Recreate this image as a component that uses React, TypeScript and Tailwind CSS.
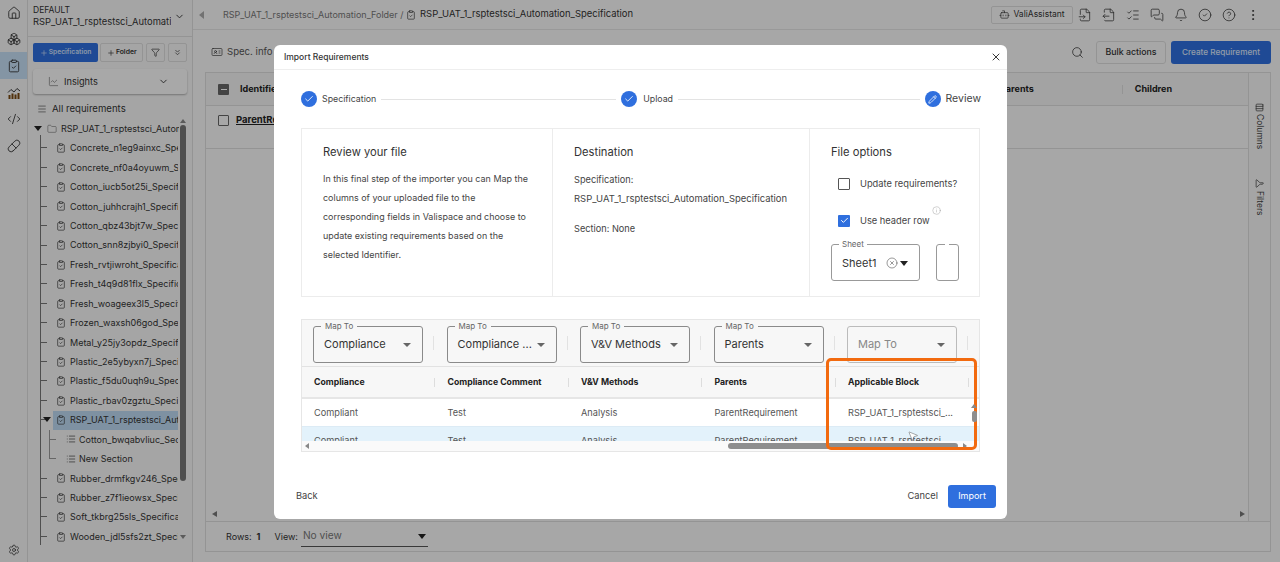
import React from "react";
import {
  Home, Boxes, ClipboardCheck, ChartLine, CodeXml, Pill, Settings, Bot, FileInput, FileOutput, ListChecks,
  MessagesSquare, Bell, CircleCheck, CircleHelp, EllipsisVertical, Search, X, Check, Pencil, Info, CircleX,
  Funnel, ChevronsDown, ChevronDown, Plus, Menu, Folder, List, Columns3, IdCard, MousePointer2,
} from "lucide-react";

const font = { fontFamily: "Inter, 'Liberation Sans', sans-serif" };

const specs = [
  "Concrete_n1eg9ainxc_Specification", "Concrete_nf0a4oyuwm_Specification", "Cotton_iucb5ot25i_Specification",
  "Cotton_juhhcrajh1_Specification", "Cotton_qbz43bjt7w_Specification", "Cotton_snn8zjbyi0_Specification",
  "Fresh_rvtjiwroht_Specification", "Fresh_t4q9d81flx_Specification", "Fresh_woageex3l5_Specification",
  "Frozen_waxsh06god_Specification", "Metal_y25jy3opdz_Specification", "Plastic_2e5ybyxn7j_Specification",
  "Plastic_f5du0uqh9u_Specification", "Plastic_rbav0zgztu_Specification",
];
const specsAfter = [
  "Rubber_drmfkgv246_Specification", "Rubber_z7f1ieowsx_Specification", "Soft_tkbrg25sls_Specification", "Wooden_jdl5sfs2zt_Specification",
];

function Tri({ className = "" }: { className?: string }) {
  return <span className={`block w-0 h-0 border-l-[4px] border-r-[4px] border-t-[5px] border-l-transparent border-r-transparent border-t-[#222] ${className}`} />;
}

function TreeRow({ name, selected }: { name: string; selected?: boolean }) {
  return (
    <div className="relative h-[19.43px] flex items-center pl-[19px]">
      <span className="absolute left-[6px] top-[9px] w-[7px] h-px bg-[#777]" />
      {selected && <span className="absolute left-[9px] top-[7px]"><Tri /></span>}
      <div className={`flex items-center gap-[4px] w-[125px] h-[19px] overflow-hidden pl-[3px] ${selected ? "bg-[#bcd9f2]" : ""}`}>
        <ClipboardCheck size={10} strokeWidth={1.6} className="shrink-0 text-[#333]" />
        <span className="text-[9px] text-[#333] whitespace-nowrap">{name}</span>
      </div>
    </div>
  );
}

function SectionRow({ name, last }: { name: string; last?: boolean }) {
  return (
    <div className="relative h-[19.43px] flex items-center pl-[32px]">
      <span className={`absolute left-[15px] top-0 w-px bg-[#999] ${last ? "h-[10px]" : "h-full"}`} />
      <span className="absolute left-[15px] top-[9px] w-[7px] h-px bg-[#999]" />
      <List size={10} strokeWidth={1.6} className="shrink-0 text-[#333]" />
      <span className="ml-[3px] text-[9px] text-[#333] whitespace-nowrap overflow-hidden w-[99px]">{name}</span>
    </div>
  );
}

function StepCircle({ pencil }: { pencil?: boolean }) {
  return (
    <span className="w-4 h-4 rounded-full bg-[#2f6fde] flex items-center justify-center shrink-0">
      {pencil ? <Pencil size={9} className="text-white" /> : <Check size={10} strokeWidth={2} className="text-white" />}
    </span>
  );
}

function MapSelect({ value, placeholder }: { value: string; placeholder?: boolean }) {
  return (
    <div className={`relative w-[110px] h-[37px] rounded-[3px] border flex items-center pl-[10px] pr-[11px] justify-between ${placeholder ? "border-[#bbb]" : "border-[#8a8a8a]"}`}>
      {!placeholder && <span className="absolute left-[7px] -top-[6px] bg-[#f7f7f7] px-[4px] text-[8px] leading-[10px] text-[#666]">Map To</span>}
      <span className={`text-[11px] whitespace-nowrap ${placeholder ? "text-[#888]" : "text-[#333]"}`}>{value}</span>
      <span className="w-0 h-0 border-l-[4px] border-r-[4px] border-t-[4px] border-l-transparent border-r-transparent border-t-[#666]" />
    </div>
  );
}

const cols = [
  { map: "Compliance", head: "Compliance", val: "Compliant" },
  { map: "Compliance ...", head: "Compliance Comment", val: "Test" },
  { map: "V&V Methods", head: "V&V Methods", val: "Analysis" },
  { map: "Parents", head: "Parents", val: "ParentRequirement" },
  { map: "Map To", head: "Applicable Block", val: "RSP_UAT_1_rsptestsci_...", placeholder: true },
];

export default function App() {
  return (
    <div className="relative w-[1280px] h-[562px] overflow-hidden flex bg-[#fafafa]" style={font}>
      {/* Icon rail */}
      <div className="w-[28px] shrink-0 flex flex-col items-center border-r border-[#ddd] bg-[#f7f7f7] text-[#333]">
        <div className="h-[26px] flex items-center justify-center w-full"><Home size={14} strokeWidth={1.5} /></div>
        <div className="h-[26px] flex items-center justify-center w-full"><Boxes size={14} strokeWidth={1.5} /></div>
        <div className="h-[27px] flex items-center justify-center w-full bg-[#c5dff5]"><ClipboardCheck size={14} strokeWidth={1.5} /></div>
        <div className="h-[27px] flex items-center justify-center w-full">
          <svg width="14" height="14" viewBox="0 0 14 14" fill="none">
            <path d="M1 6.5 L4 3.5 L7 6 L10 2.5 L13 5" stroke="#3a3a3a" strokeWidth="1" />
            <path d="M1.5 9h2v4h-2zM4.5 7.5h2V13h-2zM7.5 8.5h2V13h-2zM10.5 7h2v6h-2z" fill="#7a4a12" />
          </svg>
        </div>
        <div className="h-[26px] flex items-center justify-center w-full"><CodeXml size={14} strokeWidth={1.5} /></div>
        <div className="h-[27px] flex items-center justify-center w-full"><Pill size={14} strokeWidth={1.5} /></div>
        <div className="mt-auto h-[18px] flex items-start justify-center w-full"><Settings size={12} strokeWidth={1.5} /></div>
      </div>

      {/* Sidebar */}
      <div className="w-[165px] shrink-0 flex flex-col border-r border-[#ddd] bg-[#f7f7f7]">
        <div className="h-[37px] shrink-0 flex items-center pl-[5px] pb-[4px] border-b border-[#ddd]">
          <div className="w-[138px] overflow-hidden leading-[12px]">
            <div className="text-[8.5px] text-[#333]">DEFAULT</div>
            <div className="text-[9.4px] text-[#333] whitespace-nowrap">RSP_UAT_1_rsptestsci_Automation</div>
          </div>
          <ChevronDown size={11} className="ml-[3px] text-[#333]" />
        </div>
        <div className="flex gap-[2px] px-[5px] mt-[6px]">
          <button className="w-[66px] h-[19px] rounded-[2px] bg-[#2f6fde] text-[#cfe0fb] text-[6.7px] font-semibold flex items-center justify-center gap-[1px]"><Plus size={8} />Specification</button>
          <button className="w-[44px] h-[19px] rounded-[2px] border border-[#ddd] text-[#333] text-[6.8px] font-semibold flex items-center justify-center gap-[1px]"><Plus size={8} />Folder</button>
          <button className="w-[19px] h-[19px] ml-[1px] rounded-[2px] border border-[#ddd] flex items-center justify-center text-[#444]"><Funnel size={9} /></button>
          <button className="w-[19px] h-[19px] ml-[1px] rounded-[2px] border border-[#ddd] flex items-center justify-center text-[#444]"><ChevronsDown size={9} /></button>
        </div>
        <div className="mx-[5px] mt-[7px] h-[25px] rounded-[3px] shadow-[0_1px_2px_rgba(0,0,0,0.3)] bg-[#fbfbfb] flex items-center pl-[15px] pr-[18px]">
          <ChartLine size={11} strokeWidth={1.2} className="text-[#555]" />
          <span className="ml-[5px] text-[9.2px] text-[#333]">Insights</span>
          <ChevronDown size={11} className="ml-auto text-[#333]" />
        </div>
        <div className="flex items-center ml-[9px] mt-[8px] h-[14px]">
          <Menu size={10} strokeWidth={1.4} className="text-[#333]" />
          <span className="ml-[5px] text-[9.6px] text-[#333]">All requirements</span>
        </div>

        <div className="relative flex-1 min-h-0 mt-[3px] ml-[6px] overflow-hidden">
          <div className="absolute left-[6px] top-[16px] bottom-[17px] w-px bg-[#777]" />
          <div className="flex items-center h-[19.43px]">
            <Tri />
            <Folder size={10} strokeWidth={1.2} className="ml-[5px] shrink-0 text-[#555]" />
            <span className="ml-[4px] text-[9px] text-[#333] whitespace-nowrap overflow-hidden w-[118px]">RSP_UAT_1_rsptestsci_Automation_Folder</span>
          </div>
          {specs.map((s) => <TreeRow key={s} name={s} />)}
          <TreeRow name="RSP_UAT_1_rsptestsci_Automation_Specification" selected />
          <SectionRow name="Cotton_bwqabvliuc_Section" />
          <SectionRow name="New Section" last />
          {specsAfter.map((s) => <TreeRow key={s} name={s} />)}
          {/* tree scrollbar */}
          <span className="absolute left-[146px] top-[0px] w-0 h-0 border-l-[3px] border-r-[3px] border-b-[4px] border-l-transparent border-r-transparent border-b-[#888]" />
          <span className="absolute left-[146px] top-[6px] w-[6px] h-[356px] rounded-[3px] bg-[#777]" />
          <span className="absolute left-[146px] top-[416px] w-0 h-0 border-l-[3px] border-r-[3px] border-t-[4px] border-l-transparent border-r-transparent border-t-[#888]" />
        </div>
      </div>

      {/* Main */}
      <div className="flex-1 min-w-0 flex flex-col bg-[#fafafa]">
        <div className="h-[30px] shrink-0 border-b border-[#e5e5e5] flex items-center pl-[6px] pr-[20px]">
          <span className="w-0 h-0 border-t-[4px] border-b-[4px] border-r-[5px] border-t-transparent border-b-transparent border-r-[#aaa]" />
          <span className="ml-[19px] w-[182px] text-[9px] text-[#777] whitespace-nowrap">RSP_UAT_1_rsptestsci_Automation_Folder /</span>
          <ClipboardCheck size={10} strokeWidth={1.6} className="ml-[1px] text-[#333]" />
          <span className="ml-[4px] text-[9.45px] text-[#333] whitespace-nowrap">RSP_UAT_1_rsptestsci_Automation_Specification</span>
          <button className="ml-auto w-[82px] h-[18px] rounded-[2px] border border-[#ddd] flex items-center justify-center gap-[3px] text-[8.5px] text-[#333]"><Bot size={11} strokeWidth={1.5} />ValiAssistant</button>
          <div className="flex items-center gap-[10px] ml-[5px] text-[#333]">
            <FileInput size={14} strokeWidth={1.3} />
            <FileOutput size={14} strokeWidth={1.3} />
            <ListChecks size={14} strokeWidth={1.3} />
            <MessagesSquare size={14} strokeWidth={1.3} />
            <Bell size={14} strokeWidth={1.3} />
            <CircleCheck size={14} strokeWidth={1.3} />
            <CircleHelp size={14} strokeWidth={1.3} />
            <EllipsisVertical size={14} strokeWidth={1.5} />
          </div>
        </div>

        <div className="h-[42px] shrink-0 flex items-center pl-[18px] pr-[9px] pt-[2px]">
          <IdCard size={12} strokeWidth={1.3} className="text-[#333]" />
          <span className="ml-[4px] text-[9.6px] text-[#555]">Spec. info</span>
          <Search size={13} strokeWidth={1.4} className="ml-auto text-[#333]" />
          <button className="ml-[12px] w-[70px] h-[23px] rounded-[3px] border border-[#ddd] text-[8.8px] font-medium text-[#333]">Bulk actions</button>
          <button className="ml-[5px] w-[100px] h-[23px] rounded-[3px] bg-[#2f6fde] text-[8.2px] font-medium text-[#dbe7fb]">Create Requirement</button>
        </div>

        <div className="ml-[12px] mr-[9px] flex-1 min-h-0 flex border border-[#ddd] border-b-0">
          <div className="flex-1 min-w-0 flex flex-col">
            <div className="h-[33px] shrink-0 flex items-center bg-[#f4f4f4] border-b border-[#ddd] relative">
              <span className="ml-[12px] w-[11px] h-[11px] rounded-[1px] bg-[#666] flex items-center justify-center"><span className="w-[6px] h-px bg-white" /></span>
              <span className="ml-[11px] text-[9px] font-bold text-[#222]">Identifier</span>
              <span className="ml-auto mr-[88px] text-[9px] font-bold text-[#222]">Parents</span>
              <span className="w-px h-[9px] bg-[#ddd]" />
              <span className="ml-[12px] mr-[76px] text-[9px] font-bold text-[#222]">Children</span>
            </div>
            <div className="h-[43px] shrink-0 border-b border-[#ddd] flex items-center pb-[13px]">
              <span className="ml-[12px] w-[11px] h-[11px] border border-[#666] rounded-[1px]" />
              <span className="ml-[7px] text-[9.5px] font-bold text-[#222] underline">ParentRequirement</span>
            </div>
            <div className="flex-1" />
            <div className="h-[14px] shrink-0 pl-[6px] flex items-center justify-between pr-[3px]">
              <span className="w-0 h-0 border-t-[3px] border-b-[3px] border-r-[5px] border-t-transparent border-b-transparent border-r-[#777]" />
              <span className="w-0 h-0 border-t-[3px] border-b-[3px] border-l-[5px] border-t-transparent border-b-transparent border-l-[#777]" />
            </div>
          </div>
          <div className="w-[22px] shrink-0 border-l border-[#ddd] bg-[#f7f7f7] flex flex-col items-center pt-[30px] text-[#444]">
            <Columns3 size={9} className="rotate-90" />
            <span className="mt-[2px] text-[8.5px]" style={{ writingMode: "vertical-rl" }}>Columns</span>
            <Funnel size={9} className="mt-[30px] -rotate-90" />
            <span className="mt-[3px] text-[8.5px]" style={{ writingMode: "vertical-rl" }}>Filters</span>
          </div>
        </div>

        <div className="ml-[12px] mr-[9px] mb-[10px] h-[31px] shrink-0 border border-[#ddd] flex items-center pl-[20px] text-[9px] text-[#333]">
          <span>Rows:</span>
          <span className="ml-[5px] font-bold">1</span>
          <span className="ml-[14px]">View:</span>
          <div className="ml-[3px] w-[127px] h-[20px] border-b border-[#555] flex items-center justify-between pr-[2px] pl-[2px]">
            <span className="text-[10.2px] text-[#777]">No view</span>
            <Tri />
          </div>
        </div>
      </div>

      {/* Backdrop */}
      <div className="absolute inset-0 bg-black/[0.33]" />

      {/* Modal */}
      <div className="absolute left-[274px] top-[45px] w-[733px] h-[474px] bg-white rounded-[6px] flex flex-col">
        <div className="h-[25px] shrink-0 border-b border-[#eee] flex items-center pl-[10px] pr-[5px]">
          <span className="text-[8.5px] text-[#333] font-medium">Import Requirements</span>
          <X size={12} strokeWidth={1.8} className="ml-auto text-[#222]" />
        </div>

        <div className="flex items-center ml-[27px] mr-[26px] mt-[21px] h-[16px]">
          <StepCircle />
          <span className="ml-[5px] text-[8.8px] text-[#444]">Specification</span>
          <span className="mx-[5px] w-[235px] shrink-0 h-px bg-[#e3e3e3]" />
          <StepCircle />
          <span className="ml-[6px] text-[8.8px] text-[#444]">Upload</span>
          <span className="mx-[5px] flex-1 h-px bg-[#e3e3e3]" />
          <StepCircle pencil />
          <span className="ml-[5px] text-[10.5px] text-[#444]">Review</span>
        </div>

        {/* Info card */}
        <div className="mx-[27px] mt-[21px] h-[169px] shrink-0 border border-[#ececec] flex">
          <div className="w-[251px] shrink-0 border-r border-[#ececec] pl-[21px] pr-[14px] pt-[15px]">
            <div className="text-[11.2px] leading-[16px] text-[#333]">Review your file</div>
            <p className="mt-[9px] text-[8.95px] leading-[19px] text-[#444]">In this final step of the importer you can Map the columns of your uploaded file to the corresponding fields in Valispace and choose to update existing requirements based on the selected Identifier.</p>
          </div>
          <div className="w-[257px] shrink-0 border-r border-[#ececec] pl-[21px] pt-[15px]">
            <div className="text-[11.2px] leading-[16px] text-[#333]">Destination</div>
            <p className="mt-[10px] text-[9.2px] leading-[19px] text-[#444]">Specification:<br /><span className="text-[9.45px]">RSP_UAT_1_rsptestsci_Automation_Specification</span></p>
            <p className="mt-[11px] text-[9.2px] leading-[19px] text-[#444]">Section: None</p>
          </div>
          <div className="flex-1 pl-[21px] pt-[15px] relative">
            <div className="text-[11.2px] leading-[16px] text-[#333]">File options</div>
            <div className="flex items-center mt-[17px] ml-[7px] h-[13px]">
              <span className="w-[12px] h-[12px] border border-[#555] rounded-[1px]" />
              <span className="ml-[10px] text-[9.3px] text-[#444]">Update requirements?</span>
            </div>
            <div className="flex items-center mt-[24px] ml-[7px] h-[13px] relative">
              <span className="w-[12px] h-[12px] rounded-[1px] bg-[#2f6fde] flex items-center justify-center"><Check size={9} strokeWidth={2.5} className="text-white" /></span>
              <span className="ml-[10px] text-[9.3px] text-[#444]">Use header row</span>
              <Info size={9} strokeWidth={1} className="absolute left-[94px] -top-[8px] text-[#888]" />
            </div>
            <div className="flex mt-[17px]">
              <div className="relative w-[89px] h-[37px] border border-[#999] rounded-[3px] flex items-center pl-[10px] pt-[1px]">
                <span className="absolute left-[7px] -top-[6px] bg-white px-[3px] text-[8px] leading-[10px] text-[#666]">Sheet</span>
                <span className="text-[11px] text-[#333]">Sheet1</span>
                <CircleX size={12} strokeWidth={1} className="ml-[10px] text-[#333]" />
                <span className="ml-[2px]"><Tri /></span>
              </div>
              <div className="relative ml-[16px] w-[23px] h-[37px] border border-[#999] rounded-[3px]">
                <span className="absolute left-[8px] -top-[3px] bg-white w-[4px] h-[5px]" />
              </div>
            </div>
          </div>
        </div>

        {/* Mapping grid */}
        <div className="relative mx-[27px] mt-[22px] h-[133px] shrink-0 border border-[#e6e6e6] overflow-hidden">
          <div className="flex h-[47px] bg-[#f7f7f7] border-b border-[#e2e2e2] pl-[11px] pt-[6px]">
            {cols.map((c) => (
              <div key={c.head} className="w-[133.5px] shrink-0 flex items-start">
                <MapSelect value={c.map} placeholder={c.placeholder} />
                <span className="ml-[10px] mt-[10px] w-px h-[14px] bg-[#e2e2e2]" />
              </div>
            ))}
          </div>
          <div className="flex h-[32px] bg-[#f7f7f7] border-b-2 border-[#e6e6e6] items-center pl-[12px] pt-[1px]">
            {cols.map((c) => (
              <div key={c.head} className="w-[133.5px] shrink-0 flex items-center relative">
                <span className="text-[8.7px] font-bold text-[#222] whitespace-nowrap">{c.head}</span>
                <span className="absolute left-[120px] w-px h-[9px] bg-[#ddd]" />
              </div>
            ))}
          </div>
          <div className="flex h-[28px] items-center pl-[12px] border-b border-[#dcebf5]">
            {cols.map((c) => (
              <div key={c.head} className="w-[133.5px] shrink-0 text-[9.2px] text-[#555] whitespace-nowrap">{c.val}</div>
            ))}
          </div>
          <div className="flex h-[28px] items-center pl-[12px] bg-[#e3f2fb]">
            {cols.map((c) => (
              <div key={c.head} className="w-[133.5px] shrink-0 text-[9.2px] text-[#555] whitespace-nowrap">{c.val}</div>
            ))}
          </div>
          {/* horizontal scrollbar */}
          <div className="absolute left-0 right-0 bottom-0 h-[10px] bg-[#fafafa] flex items-center">
            <span className="ml-[3px] w-0 h-0 border-t-[3px] border-b-[3px] border-r-[4px] border-t-transparent border-b-transparent border-r-[#888]" />
            <span className="absolute left-[426px] top-[2px] w-[230px] h-[6px] rounded-[3px] bg-[#8e8e8e]" />
            <span className="absolute right-[12px] top-[2px] w-0 h-0 border-t-[3px] border-b-[3px] border-l-[4px] border-t-transparent border-b-transparent border-l-[#888]" />
          </div>
        </div>

        <div className="flex-1 flex items-center pl-[22px] pr-[11px] pt-[21px]">
          <span className="text-[9.3px] text-[#444]">Back</span>
          <span className="ml-auto text-[9.3px] text-[#444]">Cancel</span>
          <button className="ml-[10px] w-[48px] h-[23px] rounded-[3px] bg-[#2f6fde] text-[9px] text-white">Import</button>
        </div>
      </div>

      {/* Annotation */}
      <div className="absolute left-[826px] top-[358px] w-[151px] h-[92px] border-[3px] border-[#f26a0f] rounded-[5px]" />
      <span className="absolute left-[971px] top-[404px] w-0 h-0 border-l-[3px] border-r-[3px] border-b-[4px] border-l-transparent border-r-transparent border-b-[#888]" />
      <span className="absolute left-[972px] top-[411px] w-[5px] h-[11px] rounded-[2px] bg-[#8e8e8e]" />
      <MousePointer2 size={12} strokeWidth={1} className="absolute left-[907px] top-[430px] text-[#555] fill-white" />
    </div>
  );
}
